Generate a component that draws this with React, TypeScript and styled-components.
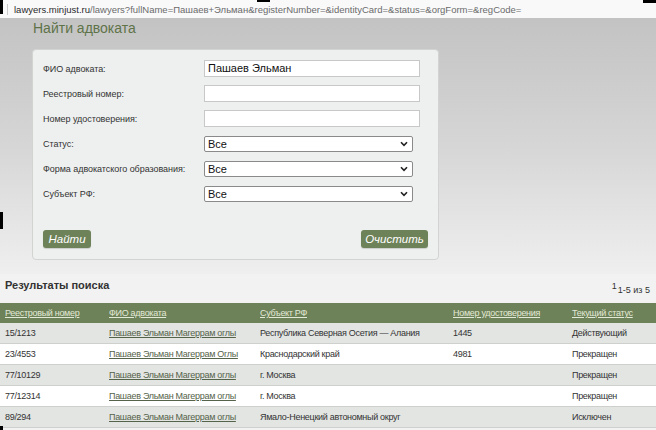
import React from 'react';
import styled, { createGlobalStyle } from 'styled-components';

const GREEN = '#6e8259';

const GlobalStyle = createGlobalStyle`
  html, body {
    margin: 0;
    padding: 0;
    background: #f2f2f2;
  }
  body {
    font-family: 'Liberation Sans', Arial, sans-serif;
    color: #333;
  }
`;

const Page = styled.div`
  position: relative;
  width: 656px;
  height: 430px;
  overflow: hidden;
  background: #f2f2f2;
`;

const AddressBar = styled.div`
  display: flex;
  align-items: center;
  height: 18px;
  background: #f9f9fa;
  font-size: 9.5px;
  color: #6b6b6b;
  white-space: nowrap;
`;

const Divider = styled.span`
  width: 1px;
  height: 11px;
  background: #c9c9c9;
  margin: 0 6px 0 7px;
`;

const Host = styled.span`
  color: #2b2b2b;
`;

const SearchArea = styled.div`
  height: 256px;
  background: linear-gradient(#c3c3c3 0%, #d6d6d6 50%, #efefef 100%);
  padding: 2px 0 0 32px;
  box-sizing: border-box;
`;

const Title = styled.h1`
  margin: 0 0 13px 1px;
  font-size: 14px;
  font-weight: normal;
  color: #5f7349;
  line-height: 16px;
`;

const Panel = styled.form`
  width: 407px;
  height: 211px;
  box-sizing: border-box;
  background: #eef0ef;
  border: 1px solid #d2d4d2;
  border-radius: 4px;
  padding: 10px 10px 0 10px;
  display: flex;
  flex-direction: column;
`;

const Row = styled.div`
  display: flex;
  align-items: center;
  height: 17px;
  margin-bottom: 8px;
`;

const Label = styled.label`
  width: 161px;
  font-size: 9px;
  letter-spacing: -0.05px;
  color: #333;
`;

const TextInput = styled.div`
  width: 216px;
  height: 17px;
  box-sizing: border-box;
  background: #fff;
  border: 1px solid #c8c8c8;
  font-size: 11px;
  line-height: 15px;
  padding-left: 3px;
  color: #111;
`;

const Select = styled.div`
  width: 209px;
  height: 16px;
  box-sizing: border-box;
  background: #fff;
  border: 1px solid #8a8a8a;
  border-radius: 2px;
  font-size: 11px;
  line-height: 14px;
  padding: 0 4px 0 3px;
  color: #111;
  display: flex;
  align-items: center;
  justify-content: space-between;
`;

const Buttons = styled.div`
  display: flex;
  justify-content: space-between;
  margin-top: 20px;
`;

const Button = styled.button<{ $wide?: boolean }>`
  width: ${(p) => (p.$wide ? '67px' : '48px')};
  height: 18px;
  padding: 0;
  border: none;
  border-radius: 3px;
  background: ${GREEN};
  color: #fff;
  font-family: 'Liberation Sans', Arial, sans-serif;
  font-style: italic;
  font-size: 11.5px;
  box-shadow: 0 1px 1px rgba(0, 0, 0, 0.15);
`;

const ResultsHead = styled.div`
  display: flex;
  justify-content: space-between;
  align-items: flex-end;
  height: 29px;
  padding: 0 6px 8px 5px;
  box-sizing: border-box;
`;

const ResultsTitle = styled.div`
  font-size: 11px;
  font-weight: bold;
  color: #333;
  margin-bottom: 4px;
`;

const Counter = styled.div`
  font-size: 9px;
  color: #333;
  sup {
    font-size: 9px;
    margin-right: 1px;
  }
`;

const Table = styled.table`
  width: 656px;
  table-layout: fixed;
  border-collapse: collapse;
  font-size: 9px;
  letter-spacing: -0.3px;
`;

const HeadCell = styled.th<{ $w: number }>`
  width: ${(p) => p.$w}px;
  height: 20px;
  padding: 0 0 0 5px;
  background: ${GREEN};
  text-align: left;
  font-weight: normal;
  color: #e2e9d6;
  text-decoration: underline;
  white-space: nowrap;
`;

const BodyRow = styled.tr<{ $odd: boolean }>`
  background: ${(p) => (p.$odd ? '#e3e5e3' : '#fff')};
  border-bottom: 1px solid #cdd0cd;
`;

const Cell = styled.td`
  height: 20px;
  padding: 0 0 0 5px;
  color: #333;
  white-space: nowrap;
  overflow: hidden;
`;

const NameLink = styled.a`
  color: #55634a;
  text-decoration: underline;
`;

const Mark = styled.div<{ $x: number; $y: number; $w: number; $h: number }>`
  position: absolute;
  left: ${(p) => p.$x}px;
  top: ${(p) => p.$y}px;
  width: ${(p) => p.$w}px;
  height: ${(p) => p.$h}px;
  background: #000;
`;

const Chevron = () => (
  <svg width="8" height="6" viewBox="0 0 8 6">
    <path d="M1 1.2 L4 4.3 L7 1.2" fill="none" stroke="#222" strokeWidth="1.6" />
  </svg>
);

const rows = [
  ['15/1213', 'Пашаев Эльман Магеррам оглы', 'Республика Северная Осетия — Алания', '1445', 'Действующий'],
  ['23/4553', 'Пашаев Эльман Магеррам Оглы', 'Краснодарский край', '4981', 'Прекращен'],
  ['77/10129', 'Пашаев Эльман Магеррам оглы', 'г. Москва', '', 'Прекращен'],
  ['77/12314', 'Пашаев Эльман Магеррам оглы', 'г. Москва', '', 'Прекращен'],
  ['89/294', 'Пашаев Эльман Магеррам оглы', 'Ямало-Ненецкий автономный округ', '', 'Исключен'],
];

const App = () => {
  return (
    <Page>
      <GlobalStyle />
      <AddressBar>
        <Divider />
        <Host>lawyers.minjust.ru</Host>
        /lawyers?fullName=Пашаев+Эльман&amp;registerNumber=&amp;identityCard=&amp;status=&amp;orgForm=&amp;regCode=
      </AddressBar>
      <SearchArea>
        <Title>Найти адвоката</Title>
        <Panel>
          <Row>
            <Label>ФИО адвоката:</Label>
            <TextInput>Пашаев Эльман</TextInput>
          </Row>
          <Row>
            <Label>Реестровый номер:</Label>
            <TextInput />
          </Row>
          <Row>
            <Label>Номер удостоверения:</Label>
            <TextInput />
          </Row>
          <Row>
            <Label>Статус:</Label>
            <Select>
              Все
              <Chevron />
            </Select>
          </Row>
          <Row>
            <Label>Форма адвокатского образования:</Label>
            <Select>
              Все
              <Chevron />
            </Select>
          </Row>
          <Row>
            <Label>Субъект РФ:</Label>
            <Select>
              Все
              <Chevron />
            </Select>
          </Row>
          <Buttons>
            <Button type="button">Найти</Button>
            <Button type="button" $wide>
              Очистить
            </Button>
          </Buttons>
        </Panel>
      </SearchArea>
      <ResultsHead>
        <ResultsTitle>Результаты поиска</ResultsTitle>
        <Counter>
          <sup>1</sup>1-5 из 5
        </Counter>
      </ResultsHead>
      <Table>
        <colgroup>
          <col style={{ width: 104 }} />
          <col style={{ width: 151 }} />
          <col style={{ width: 193 }} />
          <col style={{ width: 119 }} />
          <col style={{ width: 89 }} />
        </colgroup>
        <thead>
          <tr>
            <HeadCell $w={104}>Реестровый номер</HeadCell>
            <HeadCell $w={151}>ФИО адвоката</HeadCell>
            <HeadCell $w={193}>Субъект РФ</HeadCell>
            <HeadCell $w={119}>Номер удостоверения</HeadCell>
            <HeadCell $w={89}>Текущий статус</HeadCell>
          </tr>
        </thead>
        <tbody>
          {rows.map((r, i) => (
            <BodyRow key={r[0]} $odd={i % 2 === 0}>
              <Cell>{r[0]}</Cell>
              <Cell>
                <NameLink href="#">{r[1]}</NameLink>
              </Cell>
              <Cell>{r[2]}</Cell>
              <Cell>{r[3]}</Cell>
              <Cell>{r[4]}</Cell>
            </BodyRow>
          ))}
        </tbody>
      </Table>
      <Mark $x={0} $y={0} $w={3} $h={14} />
      <Mark $x={257} $y={0} $w={13} $h={2} />
      <Mark $x={643} $y={0} $w={13} $h={3} />
      <Mark $x={0} $y={212} $w={3} $h={17} />
      <Mark $x={0} $y={426} $w={3} $h={4} />
    </Page>
  );
};

export default App;
